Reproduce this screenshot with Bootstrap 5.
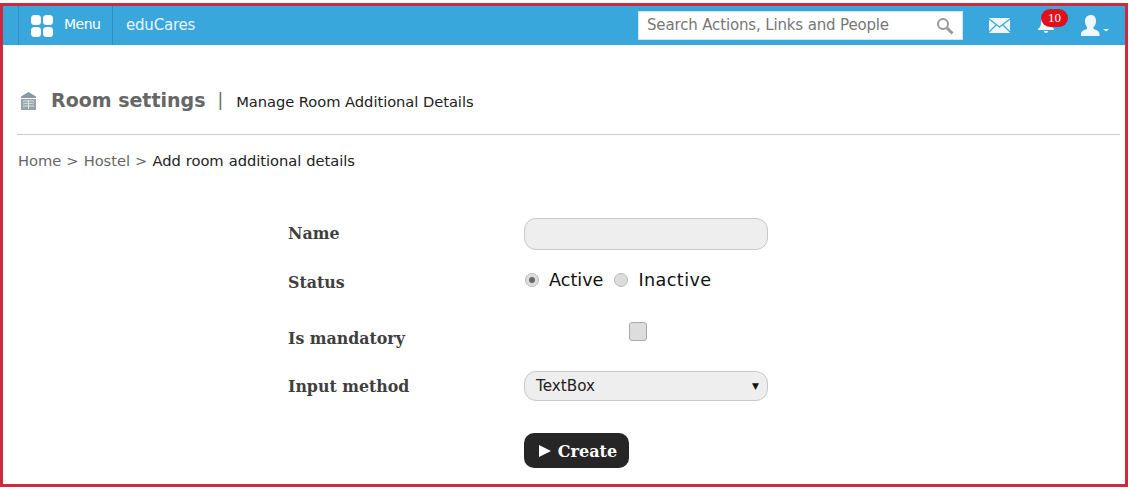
<!DOCTYPE html>
<html lang="en"><head><meta charset="utf-8"><title>Room settings</title>
<link href="https://cdn.jsdelivr.net/npm/bootstrap@5.3.0/dist/css/bootstrap.min.css" rel="stylesheet">
<style>
html,body{background:#fff;overflow:hidden}
body{font-family:"DejaVu Sans",sans-serif;color:#111}
.frame{margin-top:3px;width:1128px;height:484px;border:3px solid #cb2a3f;overflow:hidden}
.topbar{height:39px;background:#39a6dc;color:#fff}
.menu-cell{margin-left:15px;width:95px;height:39px;border-left:1px solid #2f8fc2;border-right:1px solid #2f8fc2;padding-left:12px;gap:11px;font:14px "DejaVu Sans",sans-serif;letter-spacing:-.5px}
.grid-ico{width:22px;height:22px}
.brand-cell{margin-left:13px;font-size:15px;color:#e8f5fc;letter-spacing:-.2px}
.search-box{width:325px;height:29px;background:#fff;border:1px solid #cfe6f2;margin-right:26px;padding:0 8px;color:#777;font-size:15px;letter-spacing:-.15px}
.bell-wrap{width:22px;height:22px;margin:0 22px 0 27px}
.bell-ico{display:block;margin-top:0}
.count-pill{top:-6px;left:4px;width:27px;height:18px;border-radius:10px;background:#e2101c;color:#fff;font:13px "Liberation Serif",serif}
.user-ico{margin-right:16px}
.page-head{padding:43px 0 0 0;height:90px;border-bottom:1px solid #ccc;margin:0 5px 0 14px}
.room-ico{margin-left:3px}
.page-name{font-size:19px;font-weight:700;color:#666;margin:0 0 0 14px}
.page-sep{color:#666;font-size:17px;margin:0 13px 0 12px}
.page-sub{font-size:14.7px;color:#222;letter-spacing:-.05px;padding-top:2px}
.crumbs{padding:15px 0 0 15px;font-size:14.7px;color:#666;letter-spacing:-.05px;word-spacing:.5px}
.crumbs b{font-weight:400;color:#222}
.form-area{margin:46px 0 0 285px}
.f-row{display:flex}
.f-label{width:236px;font:700 15.8px "DejaVu Serif",serif;color:#3f3f3f;margin-top:-2px}
.f-input{width:244px;height:32px;background:#eee;border:1px solid #c8c8c8;border-radius:12px}
.row-status{height:40px}
.status-label{margin-top:-1px}
.row-check{height:44px}
.label-check{margin-top:3px}
.row-select{margin-top:13px}
.label-select{margin-top:0}
.status-val{font-size:17.6px;color:#111;gap:11px;margin-left:1px;margin-top:-3px}
.status-val .txt-first{margin-left:-1px}
.status-val .txt-last{margin-left:-1px;letter-spacing:.4px}
.dot{width:14px;height:14px;border-radius:50%;background:#ddd;border:1px solid #bbb;display:inline-flex;align-items:center;justify-content:center}
.dot i{width:6px;height:6px;border-radius:50%;background:#666}
.tick{width:18px;height:19px;background:#ddd;border:1px solid #aaa;border-radius:3px;margin-left:105px;margin-top:4px}
.f-select{width:244px;height:30px;background:#eee;border:1px solid #c8c8c8;border-radius:12px;padding:1px 8px 0 11px;font-size:15.200px;color:#222}
.go-btn{margin-left:236px;margin-top:32px;width:105px;height:35px;background:#262626;color:#fff;border:0;border-radius:10px;font:700 16px "DejaVu Serif",serif;padding:1px 0 0 3px;display:flex;align-items:center;justify-content:center;gap:7px}
.caret-mark{font-size:9px;color:#111}
.arrow-ico{flex:none}
</style></head>
<body>
<div class="frame">
<nav class="topbar d-flex align-items-center">
  <div class="menu-cell d-flex align-items-center">
    <svg class="grid-ico" viewBox="0 0 22 22" fill="#fff"><rect x="0" y="0" width="10" height="10" rx="3.500"/><rect x="12" y="0" width="10" height="10" rx="3.500"/><rect x="0" y="12" width="10" height="10" rx="3.500"/><rect x="12" y="12" width="10" height="10" rx="3.500"/></svg>
    <span class="pb-1">Menu</span>
  </div>
  <div class="brand-cell">eduCares</div>
  <div class="ms-auto d-flex align-items-center">
    <div class="search-box d-flex align-items-center justify-content-between">
      <span>Search Actions, Links and People</span>
      <svg width="18" height="18" viewBox="0 0 18 18" fill="none" stroke="#999"><circle cx="7" cy="7" r="5" stroke-width="2"/><path d="M11 11l5.500 5.500" stroke-width="3"/></svg>
    </div>
    <svg width="21" height="15" viewBox="0 0 21 15"><rect width="21" height="15" rx="1" fill="#eef7fc"/><path d="M0 1l10.500 8L21 1M0 14l7-7M21 14l-7-7" fill="none" stroke="#39a6dc" stroke-width="1.200"/></svg>
    <div class="bell-wrap position-relative">
      <svg width="18" height="20" viewBox="0 0 18 20" fill="#eef7fc" class="bell-ico"><path d="M9 1c4 0 5 3 5 6 0 4 1 5 3 7v1H1v-1c2-2 3-3 3-7 0-3 1-6 5-6zM7 16h4a2 2 0 0 1-4 0z"/></svg>
      <span class="count-pill position-absolute d-flex align-items-center justify-content-center">10</span>
    </div>
    <svg width="28" height="22" viewBox="0 0 28 22" fill="#eef7fc" class="user-ico"><path d="M10 0c3 0 5 2 5 6 0 3-1 5-2.500 6v2c3 1 6 2 6 5v2H0v-2c0-3 3-4 6-5v-2C5 11 4 9 4 6c0-4 3-6 6-6z"/><path d="M22 14h6l-3 2.500z"/></svg>
  </div>
</nav>
<header class="page-head d-flex align-items-start">
  <div class="d-flex align-items-center">
    <svg class="room-ico" width="17" height="18" viewBox="0 0 17 18"><path d="M8.500 0L16 4.500V6H1V4.500z" fill="#8d99a2"/><rect x="1" y="7" width="15" height="11" fill="#98a4ac"/><path d="M3 9.500c2-.8 4-.8 5.500 0 1.500-.8 3.500-.8 5.500 0M3 12c2-.8 4-.8 5.500 0 1.500-.8 3.500-.8 5.500 0M3 14.500c2-.8 4-.8 5.500 0 1.500-.8 3.500-.8 5.500 0M8.500 8v9" fill="none" stroke="#dfe4e7"/></svg>
    <h1 class="page-name">Room settings</h1>
    <span class="page-sep">|</span>
    <span class="page-sub">Manage Room Additional Details</span>
  </div>
</header>
<div class="crumbs">Home &gt; Hostel &gt; <b>Add room additional details</b></div>
<form class="form-area" onsubmit="return false">
  <div class="f-row align-items-center"><label class="f-label">Name</label><div class="f-input"></div></div>
  <div class="f-row row-status mt-3 pt-1"><label class="f-label status-label pt-1">Status</label>
    <div class="status-val d-flex align-items-center align-self-start"><span class="dot"><i></i></span><span class="txt-first">Active</span><span class="dot"></span><span class="txt-last">Inactive</span></div></div>
  <div class="f-row row-check mt-2 pt-1"><label class="f-label label-check pt-2">Is mandatory</label><div class="tick"></div></div>
  <div class="f-row align-items-center row-select"><label class="f-label label-select">Input method</label>
    <div class="f-select d-flex align-items-center justify-content-between"><span>TextBox</span><span class="caret-mark">▼</span></div></div>
  <button class="go-btn" type="submit"><svg class="arrow-ico" width="12" height="12" viewBox="0 0 12 12" fill="#fff"><path d="M0 0l12 6-12 6z"/></svg>Create</button>
</form>
</div>
<script src="https://cdn.jsdelivr.net/npm/bootstrap@5.3.0/dist/js/bootstrap.bundle.min.js"></script>
</body></html>
